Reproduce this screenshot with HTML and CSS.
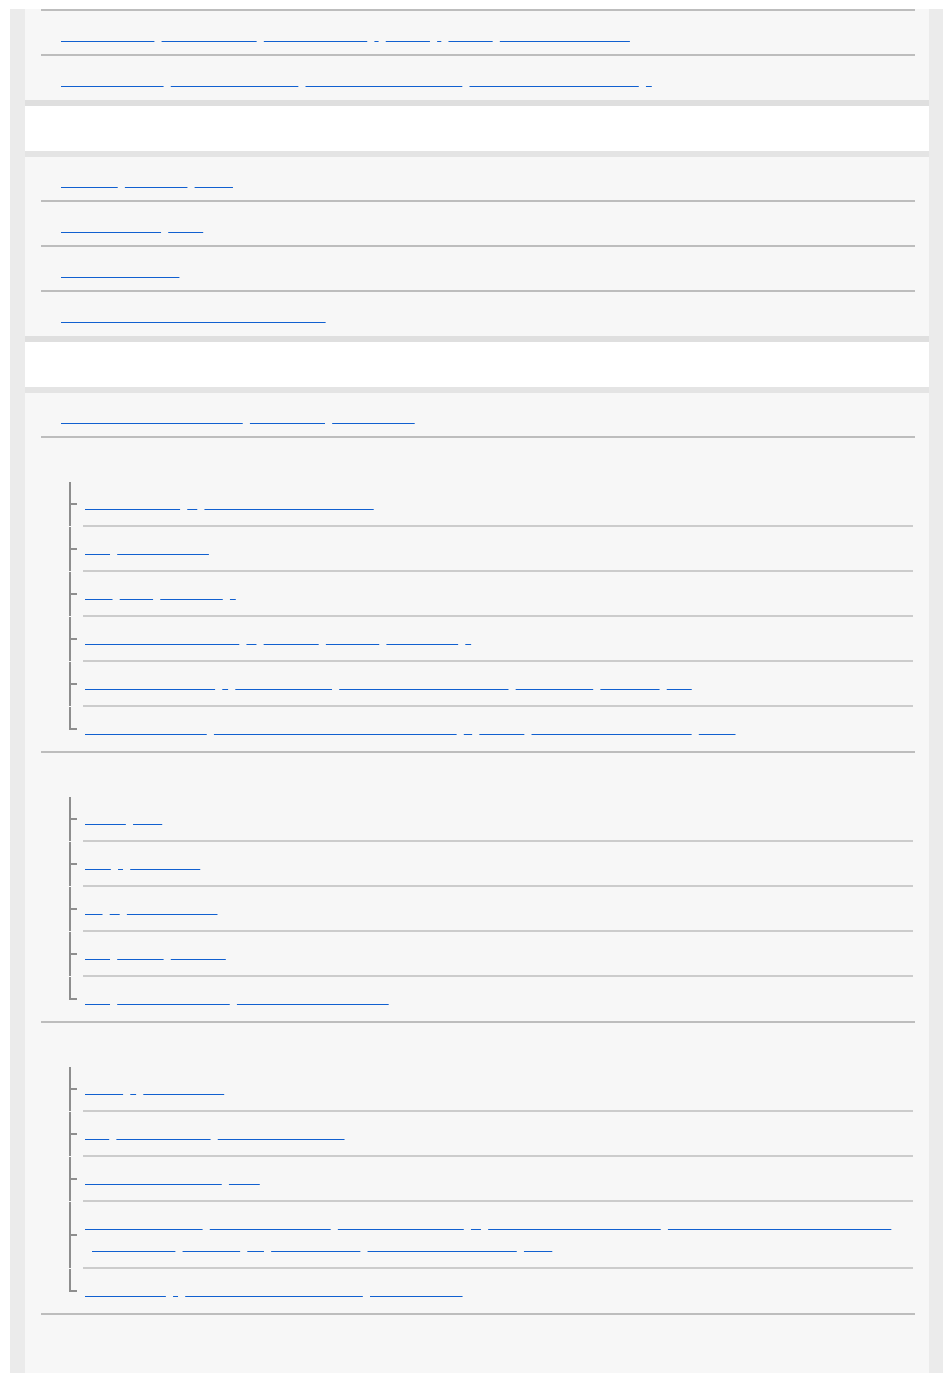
FILE: index.html
```html
<!DOCTYPE html>
<html lang="de">
<head>
  <meta charset="UTF-8">
  <title>Hilfe</title>
  <link rel="stylesheet" href="styles.css">
</head>
<body>
  <div class="page">
    <section class="sec">
      <ul class="rows cut">
        <li class="row"><a href="#"><span>Komponenten</span> <span>Lieferumfangs</span> <span>Bezeichnungen</span> <span>/</span> <span>Tasten</span> <span>/</span> <span>Regler</span> <span>Bildschirmanzeigen</span></a></li>
        <li class="row"><a href="#"><span>Grundlegendes</span> <span>Bedienungsschritte</span> <span>Aufnahmeeinstellungen</span> <span>Wiedergabeeinstellungen</span> <span>*</span></a></li>
      </ul>
    </section>

    <h2 class="head">Wiedergabe</h2>
    <section class="sec">
      <ul class="rows">
        <li class="row"><a href="#"><span>Löschen</span> <span>Schützen</span> <span>Bilder</span></a></li>
        <li class="row"><a href="#"><span>Netzwerkmenü</span> <span>Wi-Fi</span></a></li>
        <li class="row"><a href="#"><span>Computerfunktion</span></a></li>
        <li class="row"><a href="#"><span>Fehlerbehebung und Wartungshinweise</span></a></li>
      </ul>
    </section>

    <h2 class="head">Sonstiges</h2>
    <section class="sec end">
      <ul class="rows">
        <li class="row"><a href="#"><span>Vorsichtsmaßnahmen beim</span> <span>Verwenden</span> <span>der Kamera!</span></a></li>
        <li class="group">
          <div class="group-title">Vorbereitungen</div>
          <ul class="tree">
            <li><a href="#"><span>Akku aufladen</span> <span>&amp;</span> <span>Speicherkarten einsetzen</span></a></li>
            <li><a href="#"><span>Zeit</span> <span>Datum stellen</span></a></li>
            <li><a href="#"><span>Den</span> <span>Akku</span> <span>wechseln</span> <span>*</span></a></li>
            <li><a href="#"><span>Objektiv anbringen und</span> <span>&amp;</span> <span>Bajonett</span> <span>reinigen</span> <span>Gegenlicht</span> <span>*</span></a></li>
            <li><a href="#"><span>Grundeinstellungen</span> <span>*</span> <span>Bildeinstellung</span> <span>Aufnahmeeinstellungen 1</span> <span>Dateiformat</span> <span>Speicher</span> <span>Info</span></a></li>
            <li><a href="#"><span>Benutzerdefinierte</span> <span>Tastenbelegungen und Schnellmenü</span> <span>–</span> <span>Modus</span> <span>Speichereinstellungen 1</span> <span>laden</span></a></li>
          </ul>
        </li>
        <li class="group">
          <div class="group-title">Belichtung und Fokus</div>
          <ul class="tree">
            <li><a href="#"><span>Fokus</span> <span>Feld</span></a></li>
            <li><a href="#"><span>ISO</span> <span>-</span> <span>Belichtung</span></a></li>
            <li><a href="#"><span>Ev</span> <span>&amp;</span> <span>Weißabgleich</span></a></li>
            <li><a href="#"><span>Bild</span> <span>Effekte</span> <span>Stilarten</span></a></li>
            <li><a href="#"><span>Bild</span> <span>Bildstabilisierung</span> <span>Gesichtserkennung AF</span></a></li>
          </ul>
        </li>
        <li class="group">
          <div class="group-title">Filmaufnahme</div>
          <ul class="tree">
            <li><a href="#"><span>Video</span> <span>*</span> <span>aufzeichnen</span></a></li>
            <li><a href="#"><span>Ton</span> <span>Mikrofonpegel</span> <span>Audioeinstellungen</span></a></li>
            <li><a href="#"><span>Zeitlupenaufnahmen</span> <span>HFR</span></a></li>
            <li><a href="#"><span>Fernbedienungen</span> <span>Smartphone-Apps</span> <span>Bluetooth-Funktion</span> <span>&amp;</span> <span>Computer-Verbindung per</span> <span>USB-Kabel oder WLAN-Netzwerk</span> <span>Übertragung</span> <span>Kabellos</span> <span>an</span> <span>Smartphones</span> <span>Livestreaming-Dienste</span> <span>FTP</span></a></li>
            <li><a href="#"><span>Formatieren</span> <span>-</span> <span>Speicherkarte löschen und</span> <span>Daten sichern</span></a></li>
          </ul>
        </li>
      </ul>
    </section>
  </div>
</body>
</html>
```

FILE: styles.css
```css
html, body { margin: 0; background: #fff; }
body { font-family: "Liberation Sans", Arial, sans-serif; font-size: 15px; color: transparent; }

.page { margin: 9px 7px 7px 10px; border-left: 15px solid #ebebeb; border-right: 14px solid #ebebeb; background: #f7f7f7; }
.sec { padding: 0 14px 0 16px; }
.sec.end { padding-bottom: 58px; }

.head { margin: 0; height: 45px; padding-left: 16px; background: #fff; border-top: 6px solid #dfdfdf; border-bottom: 6px solid #e4e4e4; font-size: 18px; font-weight: normal; line-height: 45px; }

.rows { list-style: none; margin: 0; padding: 0; }
.rows.cut { border-top: 2px solid #bdbdbd; }
.row { padding: 11px 0 11px 20px; line-height: 21px; border-bottom: 2px solid #bdbdbd; }
.rows li.row:last-child { border-bottom: 0; padding-bottom: 12px; }

.rows a { color: transparent; text-decoration: none; }
.rows a span { text-decoration: underline; text-decoration-color: #1160d0; text-decoration-thickness: 1px; text-decoration-skip-ink: none; text-underline-offset: 3px; }
.rows a span + span { margin-left: 3px; }

.group { border-bottom: 2px solid #bdbdbd; }
.group-title { padding: 11px 0 12px 20px; line-height: 21px; }

.tree { list-style: none; margin: 0 2px 0 42px; padding: 0; }
.tree li { position: relative; padding: 8px 0 13px 6px; text-indent: -4px; line-height: 22px; border-bottom: 2px solid #cccccc; }
.tree li:last-child { border-bottom: 0; padding-bottom: 14px; }
.tree li::before { content: ""; position: absolute; left: -14px; top: 0; bottom: -1px; width: 2px; background: #8e8e8e; }
.tree li:last-child::before { bottom: auto; height: calc(50% + 1px); }
.tree li::after { content: ""; position: absolute; left: -12px; top: calc(50% - 1px); width: 6px; height: 2px; background: #8e8e8e; }
```
